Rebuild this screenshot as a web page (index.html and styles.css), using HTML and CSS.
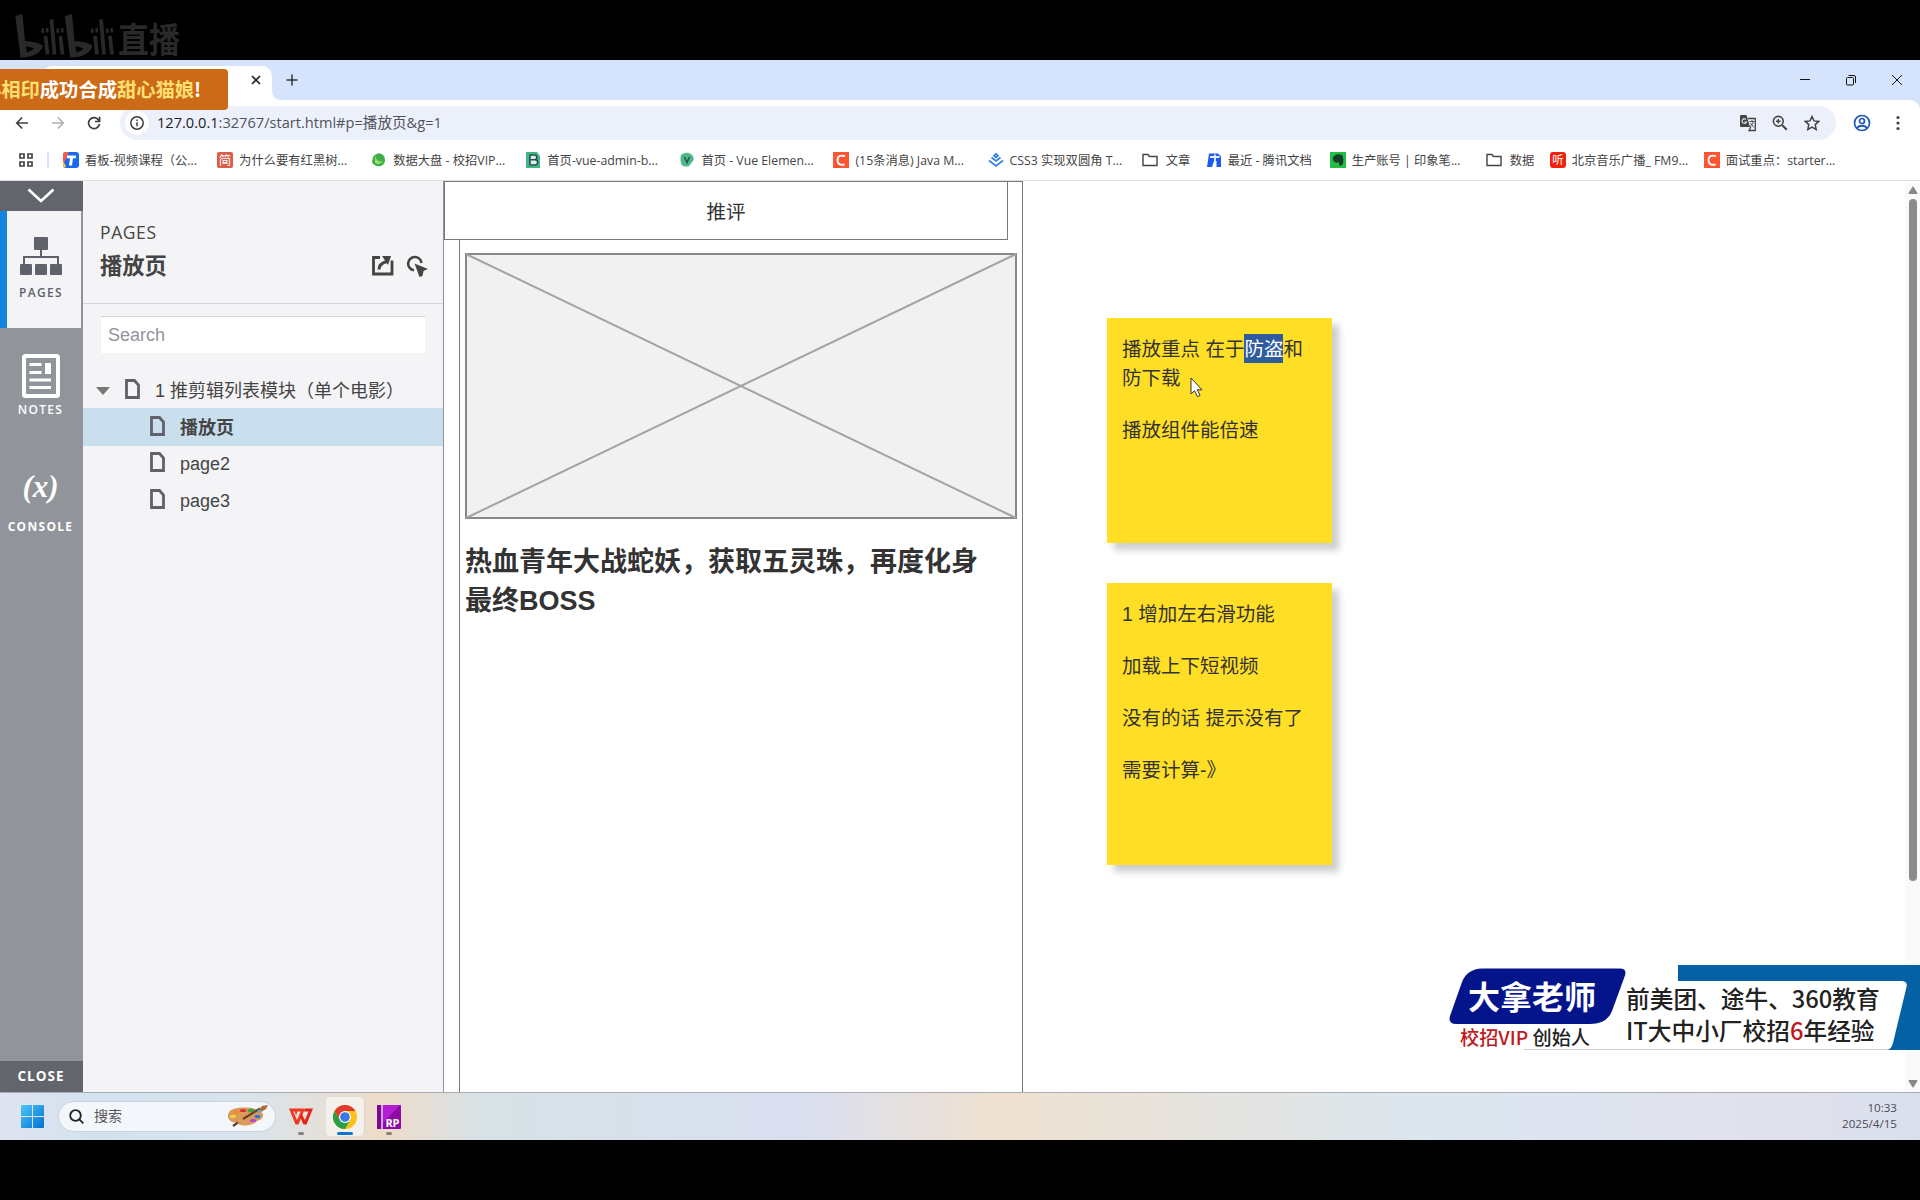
FILE: index.html
```html
<!DOCTYPE html>
<html lang="zh-CN">
<head>
<meta charset="utf-8">
<title>播放页</title>
<link rel="stylesheet" href="styles.css">
</head>
<body>
<div class="screen">
  <div class="letterbox top">
    <svg class="bili" width="118" height="60" viewBox="0 0 118 60" fill="none" stroke="#292929">
      <g id="bi">
        <path d="M15.300 16L22.500 14L25 41Q40 42 43 46Q41 53 32 56Q26 58 20.500 57.500zM26 46.500L27 52.500Q31 51.500 34 48.500Q30 46.500 26 46.500z" fill="#292929" fill-rule="evenodd" stroke="none"/>
        <path d="M45.500 36L47.500 54.500M51.500 19.500L54.500 54.500M60.500 36L62.500 54.500" stroke-width="3.800"/>
        <path d="M42.500 28.500L43 33M47 28L47.400 32.500M57.500 28.500L58 33M62 28L62.400 32.500" stroke-width="2.600"/>
      </g>
      <use href="#bi" x="49.500"/>
    </svg>
    <span class="live">直播</span>
  </div>

  <div class="tabstrip">
    <div class="tab">
      <svg width="12" height="12" viewBox="0 0 12 12" stroke="#222" stroke-width="1.600"><path d="M2 2l8 8M10 2l-8 8"/></svg>
    </div>
    <svg class="foot" width="10" height="10" viewBox="0 0 10 10"><path d="M0 0q0 10 10 10H0z" fill="#fff"/></svg>
    <svg class="newtab" width="12" height="12" viewBox="0 0 12 12" stroke="#333" stroke-width="1.500"><path d="M6 .5v11M.5 6h11"/></svg>
    <div class="wincontrols">
      <svg width="12" height="12" viewBox="0 0 12 12" stroke="#111"><path d="M1 5.500h10"/></svg>
      <svg width="12" height="12" viewBox="0 0 12 12" stroke="#111" fill="none"><rect x="1.500" y="3.500" width="7" height="7.500" rx="1"/><path d="M3.500 1.500h5.500q1.500 0 1.500 1.500v6"/></svg>
      <svg width="12" height="12" viewBox="0 0 12 12" stroke="#111"><path d="M1 1l10 10M11 1L1 11"/></svg>
    </div>
    <div class="gift"><span class="gold">心相印</span>成功合成<span class="gold">甜心猫娘</span>!</div>
  </div>

  <div class="toolbarwrap">
  <div class="toolbar">
    <svg class="nav" width="14" height="14" viewBox="0 0 14 14" fill="none" stroke="#3c3f43" stroke-width="1.600"><path d="M13 7H2M7.200 1.500L1.700 7l5.500 5.500"/></svg>
    <svg class="nav" width="14" height="14" viewBox="0 0 14 14" fill="none" stroke="#adafb3" stroke-width="1.600"><path d="M1 7h11M6.800 1.500L12.300 7l-5.500 5.500"/></svg>
    <svg class="nav" width="14" height="14" viewBox="0 0 14 14" fill="none" stroke="#3c3f43" stroke-width="1.700"><path d="M11.800 4.200A5.500 5.500 0 1 0 12.500 8M12.600 .8v4.700H8"/></svg>
    <div class="omnibox">
      <span class="info"><svg width="16" height="16" viewBox="0 0 16 16" fill="none" stroke="#3c3f43" stroke-width="1.500"><circle cx="8" cy="8" r="6.200"/><path d="M8 7.200v4M8 4.500v1.500"/></svg></span>
      <span class="url"><b>127.0.0.1</b>:32767/start.html#p=播放页&amp;g=1</span>
      <svg class="tr" width="18" height="18" viewBox="0 0 18 18"><path d="M2 1h5.500l3.500 12H2a1 1 0 0 1-1-1V2a1 1 0 0 1 1-1z" fill="#444"/><path d="M9 4.500h7.300V16.500H10l1.800-3.500" fill="none" stroke="#444" stroke-width="1.300"/><path d="M7 5.500A2.300 2.300 0 1 0 7.500 8H5.500" fill="none" stroke="#eee" stroke-width="1.100"/><path d="M10.500 7.500h5M13 6v1.500M14.500 8l-3.500 5M11.500 9l3.500 4.500" fill="none" stroke="#555"/></svg>
      <svg class="mg" width="16" height="16" viewBox="0 0 16 16" fill="none" stroke="#444"><circle cx="6.300" cy="6.300" r="4.900" stroke-width="1.600"/><path d="M10 10l4.800 4.800" stroke-width="2"/><path d="M6.300 4v4.600M4 6.300h4.600" stroke-width="1.500"/></svg>
      <svg class="st" width="16" height="16" viewBox="0 0 16 16" fill="none" stroke="#444" stroke-width="1.500"><path d="M8 1.500l2 4.400 4.800.5-3.600 3.200 1 4.800L8 12l-4.200 2.400 1-4.800L1.200 6.400 6 5.900z"/></svg>
    </div>
    <svg class="user" width="18" height="18" viewBox="0 0 18 18" fill="none" stroke="#1d57b8" stroke-width="1.700"><circle cx="9" cy="9" r="7.500"/><circle cx="9" cy="7" r="2.500"/><path d="M3.500 14q5.500-4.500 11 0"/></svg>
    <svg class="dots" width="4" height="16" viewBox="0 0 4 16" fill="#444"><circle cx="2" cy="2.500" r="1.600"/><circle cx="2" cy="8" r="1.600"/><circle cx="2" cy="13.500" r="1.600"/></svg>
  </div>
  </div>

  <div class="bookmarks">
    <svg class="apps" width="14" height="14" viewBox="0 0 14 14" fill="none" stroke="#444" stroke-width="1.700"><path d="M1 1h4v4H1zM9 1h4v4H9zM1 9h4v4H1zM9 9h4v4H9z"/></svg>
    <i class="sep"></i>
    <div class="bm"><svg viewBox="0 0 16 16"><rect width="16" height="16" rx="3" fill="#1769ef"/><path d="M0 13V3a3 3 0 0 1 3-3h3L3 7z" fill="#f25b4a"/><path d="M0 9l3 5-1 1.800Q0 15 0 13z" fill="#ffc42e"/><path d="M4 3.500h9v2.800h-3L9 13.500H6L7 6.300H4z" fill="#fff"/></svg><span>看板-视频课程（公...</span></div>
    <div class="bm"><svg viewBox="0 0 16 16"><rect width="16" height="16" rx="2" fill="#dd5c48"/><text x="8" y="12.500" font-size="12.500" text-anchor="middle" fill="#fff">简</text></svg><span>为什么要有红黑树...</span></div>
    <div class="bm"><svg viewBox="0 0 16 16"><path d="M2 5Q8-2 13 4q3 7-3 10-7 1-9-4z" fill="#3fae49"/><path d="M4 4q2 7 8 5-3 5-8 2z" fill="#9bdc6c"/></svg><span>数据大盘 - 校招VIP...</span></div>
    <div class="bm"><svg viewBox="0 0 16 16"><path d="M1 0h11l3 4v12H1z" fill="#41b883"/><path d="M5 3h4.500a2.300 2.300 0 0 1 0 4.700H5zM5 7.700h5a2.600 2.600 0 0 1 0 5.300H5z" fill="#d9f1e5" stroke="#2d5060" stroke-width="1.600"/></svg><span>首页-vue-admin-b...</span></div>
    <div class="bm"><svg viewBox="0 0 16 16"><path d="M2 3q5-4 10-1 4 3 2 7l-4 5q-7 2-8-3-1-5 0-8z" fill="#4dba87"/><path d="M5.500 5L8 10.500 10.500 5" fill="none" stroke="#284f5c" stroke-width="1.600"/></svg><span>首页 - Vue Elemen...</span></div>
    <div class="bm"><svg viewBox="0 0 16 16"><rect width="16" height="16" fill="#fc5531"/><path d="M12 4.200Q4.500 2 4.500 8T11.500 12.500" fill="none" stroke="#fff" stroke-width="1.900"/></svg><span>(15条消息) Java M...</span></div>
    <div class="bm"><svg viewBox="0 0 16 16"><path d="M8 2l2 1.800-2 1.700-2-1.700zM3.500 5.500L8 9l4.500-3.500M1 8.500l7 5.500 7-5.500" fill="none" stroke="#2f80ed" stroke-width="1.700"/></svg><span>CSS3 实现双圆角 T...</span></div>
    <div class="bm folder w1"><svg viewBox="0 0 16 16"><path d="M1 2.500h5l1.500 2H15V13.500H1z" fill="none" stroke="#444" stroke-width="1.400"/></svg><span>文章</span></div>
    <div class="bm w2"><svg viewBox="0 0 16 16"><path d="M3 1.500h9l3 3V15H10.500V9H8L6 15H1z" fill="#1f5af0"/><path d="M4 5h9.500M9 2.500v8" stroke="#e3efff" stroke-width="1.800"/></svg><span>最近 - 腾讯文档</span></div>
    <div class="bm w3"><svg viewBox="0 0 16 16"><rect width="16" height="16" fill="#21c045"/><path d="M3 5l3-2.500q3-.500 6 .500 2 3 1 9l-2.500 2-1.500-1v-2.500q-4 1-6-2z" fill="#173e2b"/></svg><span>生产账号 | 印象笔...</span></div>
    <div class="bm folder w4"><svg viewBox="0 0 16 16"><path d="M1 2.500h5l1.500 2H15V13.500H1z" fill="none" stroke="#444" stroke-width="1.400"/></svg><span>数据</span></div>
    <div class="bm"><svg viewBox="0 0 16 16"><rect width="16" height="16" rx="3" fill="#f0240c"/><text x="8" y="12" font-size="11.500" text-anchor="middle" fill="#fff">听</text></svg><span>北京音乐广播_ FM9...</span></div>
    <div class="bm"><svg viewBox="0 0 16 16"><rect width="16" height="16" fill="#fc5531"/><path d="M12 4.200Q4.500 2 4.500 8T11.500 12.500" fill="none" stroke="#fff" stroke-width="1.900"/></svg><span>面试重点：starter...</span></div>
  </div>

  <div class="main">
    <div class="rail">
      <div class="collapse"><svg width="28" height="16" viewBox="0 0 28 16" fill="none" stroke="#fff" stroke-width="2.700"><path d="M1.500 1.500L14 13 26.500 1.500"/></svg></div>
      <div class="railtab active">
        <svg width="42" height="38" viewBox="0 0 42 38" fill="#5f626a"><rect x="14" width="14" height="13" rx="1"/><path d="M20 12h2v7h17v9h-2v-7H5v7H3v-9h17z"/><rect y="27" width="12" height="11" rx="1"/><rect x="15" y="27" width="12" height="11" rx="1"/><rect x="30" y="27" width="12" height="11" rx="1"/></svg>
        <span>PAGES</span>
      </div>
      <div class="railtab">
        <svg width="38" height="44" viewBox="0 0 38 44" fill="none" stroke="#fff"><rect x="2" y="2" width="34" height="40" rx="1.500" stroke-width="4"/><path d="M7.500 10.500h12M7.500 18.500h12M7.500 26h21.500M7.500 33.500h21.500" stroke-width="2.800"/><path d="M26 9v11" stroke-width="6"/></svg>
        <span>NOTES</span>
      </div>
      <div class="railtab console"><em>(x)</em><span>CONSOLE</span></div>
      <div class="close">CLOSE</div>
    </div>

    <div class="panel">
      <div class="phead">
        <div class="plabel">PAGES</div>
        <div class="ptitle"><span>播放页</span>
          <svg width="22" height="20" viewBox="0 0 22 20" fill="none" stroke="#444" stroke-width="2.800"><path d="M8 1.500H1.500V18H20V4.500"/><path d="M7 13.500q0-6 8-8" stroke-width="3"/><path d="M10 0h9l-3 9z" fill="#444" stroke="none"/></svg>
          <svg class="ptr" width="23" height="22" viewBox="0 0 23 22"><path d="M8 15.300A6.700 6.700 0 1 1 15.500 8" fill="none" stroke="#444" stroke-width="2.600"/><path d="M8.500 8.500L22 14l-4.500 2-1 5-3 1z" fill="#444"/></svg>
        </div>
      </div>
      <div class="search">Search</div>
      <div class="row root"><svg class="tri" width="14" height="9" viewBox="0 0 14 9"><path d="M0 1h14L7 9z" fill="#777"/></svg><svg class="doc" width="15" height="20" viewBox="0 0 15 20"><path d="M1.500 1.500h8l4 4.500v12.500h-12z" fill="none" stroke="#5f626a" stroke-width="2.800"/></svg><span>1 推剪辑列表模块（单个电影）</span></div>
      <div class="row child sel"><svg class="doc" width="15" height="20" viewBox="0 0 15 20"><path d="M1.500 1.500h8l4 4.500v12.500h-12z" fill="none" stroke="#5f626a" stroke-width="2.800"/></svg><span>播放页</span></div>
      <div class="row child"><svg class="doc" width="15" height="20" viewBox="0 0 15 20"><path d="M1.500 1.500h8l4 4.500v12.500h-12z" fill="none" stroke="#5f626a" stroke-width="2.800"/></svg><span>page2</span></div>
      <div class="row child"><svg class="doc" width="15" height="20" viewBox="0 0 15 20"><path d="M1.500 1.500h8l4 4.500v12.500h-12z" fill="none" stroke="#5f626a" stroke-width="2.800"/></svg><span>page3</span></div>
    </div>

    <div class="canvas">
      <div class="frame">
        <svg class="placeholder" width="552" height="266" viewBox="0 0 552 266"><rect x="1" y="1" width="550" height="264" fill="#f1f1f1" stroke="#888" stroke-width="2"/><path d="M1 1l550 264M551 1L1 265" stroke="#a3a3a3" stroke-width="2"/></svg>
        <h1>热血青年大战蛇妖，获取五灵珠，再度化身最终BOSS</h1>
      </div>
      <div class="header">推评</div>
      <div class="note n1"><p>播放重点 在于<mark>防盗</mark>和<br>防下载</p><p>播放组件能倍速</p>
        <svg class="cursor" width="14" height="21" viewBox="0 0 14 21"><path d="M1 1v16l3.500-3.300 3 6 2.600-1.200-2.800-5.700H12z" fill="#fff" stroke="#333"/></svg>
      </div>
      <div class="note n2"><p>1 增加左右滑功能</p><p>加载上下短视频</p><p>没有的话 提示没有了</p><p>需要计算-》</p></div>
    </div>
    <div class="scrollbar">
      <svg width="10" height="8" viewBox="0 0 10 8" fill="#888"><path d="M5 0l4.500 7q0 1-1 1h-7q-1 0-1-1z"/></svg>
      <i class="thumb"></i>
      <svg width="10" height="8" viewBox="0 0 10 8" fill="#888"><path d="M5 8l4.500-7q0-1-1-1h-7q-1 0-1 1z"/></svg>
    </div>
    <div class="promo">
      <svg class="promobg" width="472" height="86" viewBox="0 0 472 86"><path d="M230 0h242v85H230z" fill="#0461a3"/><path d="M80 16H453q7 0 5.500 6L445 78q-2 7-6 7H80z" fill="#fff"/><path d="M76 84.500h364" stroke="#c9ced6"/><path d="M34 3.500H172q7 0 5 7L164 46q-5 13-22 13H8Q0 59 2 51L14 17Q19 4 34 3.500z" fill="#04158c"/></svg>
      <div class="badge">大拿老师</div>
      <div class="role"><b>校招VIP</b> 创始人</div>
      <div class="cv">前美团、途牛、360教育<br>IT大中小厂校招<b>6</b>年经验</div>
    </div>
  </div>

  <div class="taskbar">
    <svg class="start" width="23" height="23" viewBox="0 0 23 23"><defs><linearGradient id="w" x2="1" y2="1"><stop stop-color="#4cc6f7"/><stop offset="1" stop-color="#0270d0"/></linearGradient></defs><path d="M1 0h10v11H0V1q0-1 1-1zM12 0h10q1 0 1 1v10H12zM0 12h11v11H1q-1 0-1-1zM12 12h11v10q0 1-1 1H12z" fill="url(#w)"/></svg>
    <div class="tsearch">
      <svg width="15" height="15" viewBox="0 0 15 15" fill="none" stroke="#222" stroke-width="1.800"><circle cx="6.500" cy="6.500" r="5.300"/><path d="M10.300 10.300l4 4"/></svg>
      <span>搜索</span>
      <svg width="41" height="22" viewBox="0 0 41 22"><path d="M1 12Q0 3 15 2.500 32 2 36 9q1 5-6 7-4 5-14 4.500-5-.500-5-3.500-8 2-10-5z" fill="#d99a5c"/><ellipse cx="9" cy="7" rx="3" ry="1.600" fill="#f08a24"/><ellipse cx="16" cy="5.500" rx="3.300" ry="1.600" fill="#d8322c"/><ellipse cx="24" cy="5.500" rx="3.300" ry="1.800" fill="#3aa844"/><ellipse cx="6" cy="11.500" rx="3" ry="1.700" fill="#f3cf3a"/><ellipse cx="30.500" cy="11.500" rx="3" ry="1.700" fill="#2d76d2"/><ellipse cx="26" cy="15.500" rx="3.300" ry="1.600" fill="#b348d8"/><path d="M6 21l5-3.500M16 14L33 3.500" stroke="#6d3f22" stroke-width="2.200"/><path d="M32 5l3-4 6-1-2 4-5 3z" fill="#b06a38"/><path d="M30 6l2.500-2 2 2-2.500 2z" fill="#5aa7d8"/></svg>
    </div>
    <div class="app wps on"><svg width="24" height="17" viewBox="0 0 24 17"><path d="M0 .5h13l-1 3H8.500L7 7.500 5.800 3.500H4.300L8 12l5-11.500h3L9.500 16.500H6.500z" fill="#f03a20"/><path d="M16 .5h8l-6.500 16h-3L11 9l1.500-3.500L16 12l3.500-8.500H15z" fill="#e2261a"/></svg></div>
    <div class="app chrome on"><svg width="24" height="24" viewBox="0 0 24 24"><circle cx="12" cy="12" r="12" fill="#fbc116"/><path d="M12 6h10.400A12 12 0 0 0 1.600 6L7 15z" fill="#de3b2e"/><path d="M1.600 6A12 12 0 0 0 12 24l5.200-9-5.200 3-5.200-3z" fill="#2b9e49"/><circle cx="12" cy="12" r="6" fill="#fff"/><circle cx="12" cy="12" r="4.800" fill="#3b78e7"/></svg></div>
    <div class="app rp on"><svg width="24" height="24" viewBox="0 0 24 24"><rect width="24" height="24" rx="1" fill="#8d0ca8"/><path d="M6 0h17L6 18z" fill="#b51fd2"/><path d="M0 0h4v24H0z" fill="#7c0a97"/><path d="M5 0v24" stroke="#ecd3f3" stroke-width="1.500"/><text x="22.500" y="21.500" font-size="11" font-weight="700" text-anchor="end" fill="#fff" textLength="14">RP</text></svg></div>
    <div class="clock">10:33<br>2025/4/15</div>
  </div>
  <div class="letterbox bottom"></div>
</div>
</body>
</html>
```
FILE: styles.css
```css
* { box-sizing: border-box; }
body { margin: 0; background: #000; }
svg { display: block; flex: none; }
.screen { width: 1920px; height: 1200px; overflow: hidden; display: flex; flex-direction: column; font-family: "Open Sans", "Noto Sans CJK SC", sans-serif; color: #333; }
.letterbox { background: #000; height: 60px; flex: none; }
.letterbox.top { display: flex; align-items: flex-start; }
.live { color: #292929; font: 700 31px/40px "Noto Sans CJK SC", sans-serif; margin-top: 18px; transform: scaleY(1.12); }

.tabstrip { position: relative; height: 40px; flex: none; background: #d5e3fd; display: flex; align-items: center; }
.tab { margin-left: 42px; margin-top: 6px; width: 230px; height: 34px; background: #fff; border-radius: 10px 10px 0 0; display: flex; align-items: center; justify-content: flex-end; padding: 0 10px 6px 0; }
.foot { align-self: flex-end; }
.newtab { margin-left: 4px; }
.wincontrols { margin-left: auto; display: flex; gap: 34px; padding-right: 17px; }
.gift { position: absolute; z-index: 2; left: 0; top: 9px; width: 228px; height: 41px; border-radius: 0 4px 4px 0; background: #cb6a17; color: #fff; font: 700 19.300px/41px "Noto Sans CJK SC", sans-serif; text-indent: -18px; white-space: nowrap; overflow: hidden; }
.gold { color: #ffdf70; }

.toolbarwrap { background: #d5e3fd; flex: none; }
.toolbar { height: 46px; background: #fff; border-top-right-radius: 10px; display: flex; align-items: center; padding-left: 15px; }
.nav { margin-right: 22px; }
.omnibox { margin-left: -3px; width: 1716px; height: 34px; border-radius: 17px; background: #ecf0fb; display: flex; align-items: center; padding-left: 5px; }
.info { width: 24px; height: 24px; border-radius: 12px; background: #fff; display: flex; align-items: center; justify-content: center; }
.url { margin: -3px 0 0 8px; font-size: 14.600px; color: #50545a; flex: 1; white-space: nowrap; }
.url b { font-weight: 400; color: #222; }
.mg { margin-left: 15px; } .st { margin: 0 16px 0 16px; }
.user { margin-left: 17px; } .dots { margin-left: 25px; }

.bookmarks { height: 35px; flex: none; background: #fff; border-bottom: 1px solid #dcdee1; display: flex; align-items: center; padding: 0 0 6px 19px; font-size: 12.300px; color: #444; }
.bm span { margin-top: -1px; }
.sep { width: 2px; height: 16px; background: #d3e2fb; margin: 0 14px 0 14px; }
.bm { width: 154.100px; display: flex; align-items: center; gap: 6px; flex: none; white-space: nowrap; }
.bm svg { width: 16px; height: 16px; }
.folder { gap: 8px; }
.w1 { width: 64px; } .w2 { width: 124px; } .w3 { width: 156px; } .w4 { width: 64px; }

.main { position: relative; height: 912px; flex: none; display: flex; background: #fff; border-bottom: 1px solid #a9abb0; }
.rail { width: 83px; background: #92949b; display: flex; flex-direction: column; color: #fff; font: 600 12px/16px "Open Sans", sans-serif; letter-spacing: 1.300px; }
.collapse { height: 30px; background: #62656c; display: flex; justify-content: center; align-items: center; padding-right: 2px; }
.railtab { height: 117px; display: flex; flex-direction: column; align-items: center; padding: 26px 2px 0 0; gap: 10px; }
.railtab.active { background: #f4f4f6; color: #5f626a; border-left: 7px solid #1586df; margin-right: 2px; padding-right: 6px; }
.railtab:nth-child(3) { gap: 4px; }
.railtab.console { gap: 15px; padding-top: 25px; font-weight: 700; }
.console em { font: italic 700 31px/34px "Liberation Serif", serif; letter-spacing: 0; }
.close { margin-top: auto; height: 31px; background: #62656c; text-align: center; font: 700 13.500px/31px "Open Sans", sans-serif; letter-spacing: 1px; padding-right: 1px; }

.panel { width: 361px; background: #f4f4f6; border-right: 1px solid #8f9298; }
.phead { height: 123px; border-bottom: 1px solid #d3d5da; padding: 39px 14px 0 17px; color: #444; }
.plabel { font: 400 17.500px/24px "Open Sans", sans-serif; letter-spacing: .6px; }
.ptitle { display: flex; align-items: center; font: 700 22.300px/34px "Noto Sans CJK SC", sans-serif; margin-top: 6px; }
.ptitle span { flex: 1; margin-top: -3px; }
.ptr { margin-left: 12px; }
.search { margin: 12px 18px 18px 18px; height: 37px; background: #fff; border-top: 1px solid #d3d5da; font: 18px/37px "Liberation Sans", sans-serif; color: #92949b; padding-left: 7px; }
.row { height: 36.500px; display: flex; align-items: center; font: 18px/36px "Liberation Sans", "Noto Sans CJK SC", sans-serif; color: #444; white-space: nowrap; padding-top: 1px; }
.root { padding: 3px 0 0 13px; }
.tri { margin-right: 15px; }
.doc { margin-right: 15px; margin-top: -4px; }
.child { padding-left: 67px; }
.sel { height: 38px; background: #c9dfee; font-weight: 700; padding-top: 2px; }

/* Prototype widgets are placed freely on the canvas. */
.canvas { position: relative; width: 1461px; overflow: hidden; background: #fff; }
.frame { position: absolute; left: 15px; top: 0; width: 564px; height: 930px; border: 1px solid #797979; padding: 71px 5px 0 5px; }
.frame h1 { margin: 24px 0 0; font: 700 27px/39px "Liberation Sans", "Noto Sans CJK SC", sans-serif; color: #333; width: 530px; }
.header { position: absolute; left: 0; top: 0; width: 564px; height: 59px; background: #fff; border: 1px solid #797979; text-align: center; font: 19.500px/60px "Liberation Sans", "Noto Sans CJK SC", sans-serif; }
.note { position: absolute; left: 663px; width: 225px; background: #ffdf25; box-shadow: 7px 7px 7px rgba(0,0,0,.2); padding: 17px 0 0 15px; font: 19.500px/29px "Liberation Sans", "Noto Sans CJK SC", sans-serif; }
.note p { margin: 0 0 23px; white-space: nowrap; }
.n1 { top: 137px; height: 225px; }
.n2 { top: 402px; height: 282px; }
mark { background: #2f5c9f; color: #fff; padding: 4px 0 3px; }
.cursor { position: absolute; left: 83px; top: 59px; }

/* Stream overlay above the page and its scrollbar. */
.promo { position: absolute; left: 1448px; top: 784px; width: 472px; height: 86px; font-family: "Noto Sans CJK SC", sans-serif; white-space: nowrap; }
.promobg { position: absolute; left: 0; top: 0; }
.badge, .role, .cv { position: absolute; }
.badge { left: 20px; top: 7px; font-size: 32px; line-height: 46px; font-weight: 700; color: #fff; }
.role { left: 12px; top: 59px; font-size: 19.200px; line-height: 26px; font-weight: 500; color: #222; }
.cv { left: 178px; top: 17px; font-size: 23.700px; line-height: 32px; font-weight: 500; color: #222; }
.role b, .cv b { color: #c01820; font-weight: 500; }
.scrollbar { width: 15px; background: #fafafc; display: flex; flex-direction: column; align-items: center; padding: 5px 0 4px 1px; }
.thumb { width: 8px; height: 682px; border-radius: 4px; background: #8b8b8d; margin: 5px 0 auto; }

.taskbar { height: 47px; flex: none; display: flex; align-items: center; padding: 0 23px 0 21px; background: linear-gradient(90deg, #e0e3f0, #d2e2ef 100px, #d8e4ed 240px, #e8dfd3 350px, #eedcc8 380px, #e2dfd9 435px, #d6e2e6 480px, #d9dff0 800px, #efe1d0 1000px, #dbe6ee 1420px, #dde5f0 1530px, #e1e1ed 1760px, #d9e0ec); }
.start { margin-top: -1px; }
.tsearch { margin-left: 14px; margin-top: -1px; width: 218px; height: 31px; border-radius: 16px; background: #f3f7fb; border: 1px solid #cbd3dc; display: flex; align-items: center; padding: 0 7px 0 10px; font-size: 14px; color: #555; }
.tsearch span { margin: -2px 0 0 10px; flex: 1; font-family: "Noto Sans CJK SC", sans-serif; }
.app { height: 39px; position: relative; display: flex; align-items: center; justify-content: center; }
.wps { width: 24px; margin-left: 13px; }
.chrome { width: 38px; margin-left: 13px; background: #f4f0ec; border-radius: 4px; box-shadow: 1px 0 1px #d8d2cc; }
.rp { width: 24px; margin-left: 13px; }
.on::after { content: ""; position: absolute; bottom: 1px; width: 6px; height: 3px; border-radius: 2px; background: #85817e; }
.chrome.on::after { width: 16px; background: #1275c9; }
.clock { margin: -2px 0 0 auto; font-size: 11.600px; line-height: 16px; text-align: right; color: #4a4d55; }
```
